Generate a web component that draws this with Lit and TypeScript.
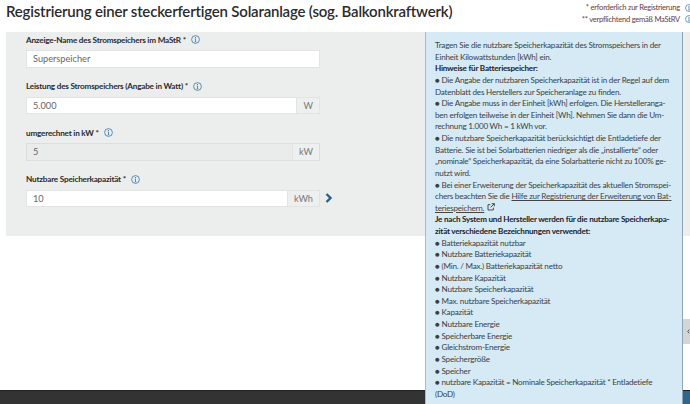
import { LitElement, html, css, svg } from 'lit';
import { customElement } from 'lit/decorators.js';

const infoIcon = html`<svg class="info" viewBox="0 0 12 12" width="9" height="9">
  <circle cx="6" cy="6" r="5.2" fill="none" stroke="#2f6f9f" stroke-width="1"></circle>
  <path d="M6 5.2V9M5 9h2M5 5.2h1" fill="none" stroke="#2f6f9f" stroke-width="1"></path>
  <circle cx="6" cy="3.3" r=".8" fill="#2f6f9f"></circle>
</svg>`;

const extIcon = svg`<svg viewBox="0 0 12 12" width="8" height="8" style="margin-left:3px">
  <path d="M9.5 7v3.5h-8v-8H5M7 1h4v4M11 1L5.5 6.5" fill="none" stroke="#333" stroke-width="1.3"></path>
</svg>`;

const bullets = [
  'Batteriekapazität nutzbar',
  'Nutzbare Batteriekapazität',
  '(Min. / Max.) Batteriekapazität netto',
  'Nutzbare Kapazität',
  'Nutzbare Speicherkapazität',
  'Max. nutzbare Speicherkapazität',
  'Kapazität',
  'Nutzbare Energie',
  'Speicherbare Energie',
  'Gleichstrom-Energie',
  'Speichergröße',
  'Speicher',
];

@customElement('app-root')
export class AppRoot extends LitElement {
  static styles = css`
    :host {
      display: block;
      position: relative;
      width: 690px;
      height: 404px;
      overflow: hidden;
      background: #fff;
      font-family: "Lato", "Noto Sans", sans-serif;
      color: #333;
    }
    .page {
      display: flex;
      flex-direction: column;
      height: 404px;
    }
    .head {
      display: flex;
      justify-content: space-between;
      height: 32px;
      padding-left: 6px;
      box-sizing: border-box;
    }
    h1 {
      margin: 0;
      font-size: 15px;
      font-weight: 600;
      letter-spacing: -0.2px;
      line-height: 23px;
      color: #2b2b2b;
      white-space: nowrap;
    }
    .legend {
      flex: none;
      font-size: 7.6px;
      letter-spacing: -0.25px;
      line-height: 11.5px;
      padding-top: 2px;
      margin-right: -3px;
      color: #6b3a3a;
      white-space: nowrap;
    }
    .legend div {
      display: flex;
      justify-content: flex-end;
      align-items: center;
      gap: 5px;
    }
    .legend .info {
      width: 8px;
      height: 8px;
    }
    .form {
      margin-left: 6px;
      height: 204px;
      box-sizing: border-box;
      background: #eceeee;
      padding: 0 0 0 20px;
      display: flex;
      flex-direction: column;
    }
    .field { width: 294px; position: relative; }
    .field + .field { margin-top: 11px; }
    label {
      display: flex;
      align-items: center;
      gap: 5px;
      height: 15px;
      font-size: 8.2px;
      font-weight: 700;
      letter-spacing: -0.22px;
      color: #2b2b2b;
      white-space: nowrap;
    }
    .control {
      display: flex;
      height: 17.5px;
      margin-top: 3px;
      background: #fff;
      border: 1px solid #e2e4e4;
      box-sizing: border-box;
      font-size: 9.2px;
      line-height: 15.5px;
      color: #666;
    }
    .value { flex: 1; padding-left: 6px; }
    .unit {
      padding: 0 6px;
      min-width: 8px;
      text-align: center;
      background: #eef0f0;
      border-left: 1px solid #e2e4e4;
      color: #777;
    }
    .disabled { background: #eaecec; border-color: #dcdede; }
    .more {
      position: absolute;
      right: -13px;
      bottom: 4px;
    }
    .tip {
      position: absolute;
      left: 425px;
      top: 32px;
      width: 258px;
      height: 372px;
      box-sizing: border-box;
      background: #d6eaf6;
      border-left: 1px solid #9dbdd2;
      border-right: 1px solid #8fa5b3;
      padding: 8px 8px 0 9px;
      font-size: 8.1px;
      letter-spacing: -0.22px;
      line-height: 11.63px;
      color: #3a3f42;
      z-index: 2;
    }
    .tip strong { font-weight: 700; color: #222; }
    .tip a { color: #444; text-decoration: underline; }
    .foot {
      margin-top: auto;
      height: 14px;
      background: #333;
      border-top: 1px solid #222;
      box-sizing: border-box;
      display: flex;
      justify-content: flex-end;
    }
    .foot span {
      width: 7px;
      background: #2f6690;
    }
    .handle {
      position: absolute;
      right: 0;
      top: 319px;
      width: 7px;
      height: 25px;
      background: #d3d5d6;
      display: flex;
      align-items: center;
      justify-content: flex-end;
    }
  `;

  render() {
    return html`
      <div class="page">
        <div class="head">
          <h1>Registrierung einer steckerfertigen Solaranlage (sog. Balkonkraftwerk)</h1>
          <div class="legend">
            <div>* erforderlich zur Registrierung ${infoIcon}</div>
            <div>** verpflichtend gemäß MaStRV ${infoIcon}</div>
          </div>
        </div>
        <div class="form">
          <div class="field">
            <label>Anzeige-Name des Stromspeichers im MaStR * ${infoIcon}</label>
            <div class="control"><span class="value">Superspeicher</span></div>
          </div>
          <div class="field">
            <label>Leistung des Stromspeichers (Angabe in Watt) * ${infoIcon}</label>
            <div class="control"><span class="value">5.000</span><span class="unit">W</span></div>
          </div>
          <div class="field">
            <label>umgerechnet in kW * ${infoIcon}</label>
            <div class="control disabled"><span class="value">5</span><span class="unit">kW</span></div>
          </div>
          <div class="field">
            <label>Nutzbare Speicherkapazität * ${infoIcon}</label>
            <div class="control"><span class="value">10</span><span class="unit">kWh</span></div>
            <svg class="more" viewBox="0 0 8 10" width="8" height="10">
              <path d="M1.5 1l4 4-4 4" fill="none" stroke="#2b5f8a" stroke-width="2.4"></path>
            </svg>
          </div>
        </div>
        <div class="foot"><span></span></div>
      </div>
      <div class="tip">
        Tragen Sie die nutzbare Speicherkapazität des Stromspeichers in der Einheit Kilowattstunden [kWh] ein.<br />
        <strong>Hinweise für Batteriespeicher:</strong><br />
        ● Die Angabe der nutzbaren Speicherkapazität ist in der Regel auf dem Datenblatt des Herstellers zur Speicheranlage zu finden.<br />
        ● Die Angabe muss in der Einheit [kWh] erfolgen. Die Herstelleranga&shy;ben erfolgen teilweise in der Einheit [Wh]. Nehmen Sie dann die Um&shy;rechnung 1.000 Wh = 1 kWh vor.<br />
        ● Die nutzbare Speicherkapazität berücksichtigt die Entladetiefe der Batterie. Sie ist bei Solarbatterien niedriger als die „installierte“ oder „nominale“ Speicherkapazität, da eine Solarbatterie nicht zu 100% ge&shy;nutzt wird.<br />
        ● Bei einer Erweiterung der Speicherkapazität des aktuellen Stromspei&shy;chers beachten Sie die <a>Hilfe zur Registrierung der Erweiterung von Bat&shy;teriespeichern.</a>${extIcon}<br />
        <strong>Je nach System und Hersteller werden für die nutzbare Speicherkapa&shy;zität verschiedene Bezeichnungen verwendet:</strong><br />
        ${bullets.map((b) => html`● ${b}<br />`)}
        ● nutzbare Kapazität = Nominale Speicherkapazität * Entladetiefe<br />(DoD)
      </div>
      <div class="handle">
        <svg viewBox="0 0 4 6" width="3" height="5"><path d="M3 0.5L1 3l2 2.5" fill="none" stroke="#333" stroke-width="1"></path></svg>
      </div>
    `;
  }
}
